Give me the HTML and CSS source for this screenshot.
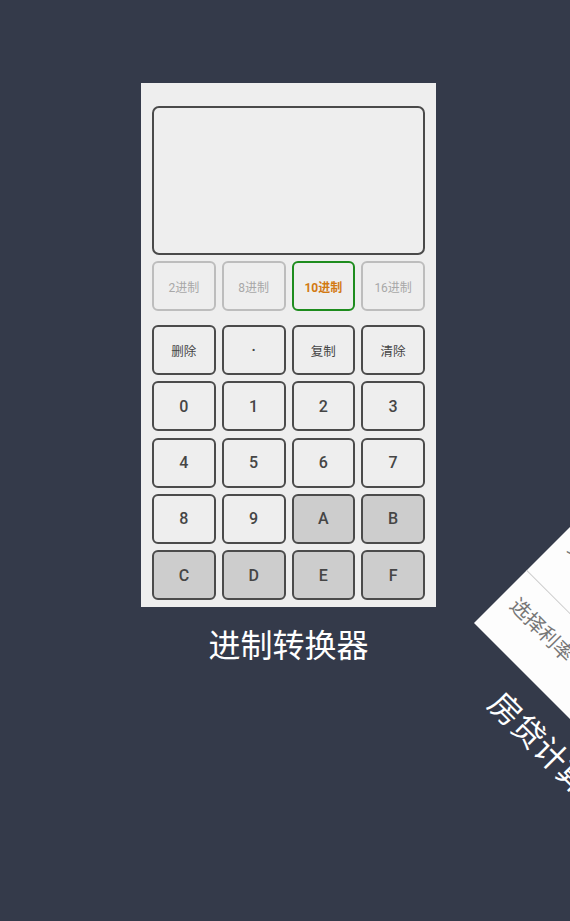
FILE: index.html
```html
<!DOCTYPE html>
<html lang="zh">
<head>
<meta charset="utf-8">
<title>进制转换器</title>
<link rel="stylesheet" href="styles.css">
</head>
<body>
<div class="stage">
  <div class="item">
    <div class="card">
      <div class="display"></div>
      <div class="modes">
        <div class="mode">2进制</div>
        <div class="mode">8进制</div>
        <div class="mode active">10进制</div>
        <div class="mode">16进制</div>
      </div>
      <div class="keys">
        <div class="key small">删除</div>
        <div class="key dot">·</div>
        <div class="key small">复制</div>
        <div class="key small">清除</div>
        <div class="key">0</div>
        <div class="key">1</div>
        <div class="key">2</div>
        <div class="key">3</div>
        <div class="key">4</div>
        <div class="key">5</div>
        <div class="key">6</div>
        <div class="key">7</div>
        <div class="key">8</div>
        <div class="key">9</div>
        <div class="key hex">A</div>
        <div class="key hex">B</div>
        <div class="key hex">C</div>
        <div class="key hex">D</div>
        <div class="key hex">E</div>
        <div class="key hex">F</div>
      </div>
    </div>
    <div class="caption">进制转换器</div>
  </div>

  <div class="item next">
    <div class="card loan">
      <div class="row tall">贷款年限</div>
      <div class="row">选择利率</div>
    </div>
    <div class="caption">房贷计算器</div>
  </div>
</div>
</body>
</html>
```

FILE: styles.css
```css
html, body {
  margin: 0;
  padding: 0;
  background: #343a4a;
  width: 570px;
  height: 921px;
  overflow: hidden;
  font-family: Roboto, "Noto Sans CJK SC", sans-serif;
}

.stage {
  position: relative;
  width: 570px;
  height: 921px;
  padding: 83px 0 0 141px;
  box-sizing: border-box;
}

.item {
  width: 295px;
}

.card {
  width: 295px;
  height: 524px;
  box-sizing: border-box;
  background: #eeeeee;
  padding: 23px 11px 7px 11px;
  display: flex;
  flex-direction: column;
}

.display {
  height: 149px;
  box-sizing: border-box;
  border: 2px solid #4a4a4a;
  border-radius: 7px;
  background: #eeeeee;
}

.modes {
  margin-top: 6px;
  display: grid;
  grid-template-columns: repeat(4, 1fr);
  column-gap: 6px;
}

.mode {
  height: 50px;
  box-sizing: border-box;
  border: 2px solid #bdbdbd;
  border-radius: 6px;
  display: flex;
  align-items: center;
  justify-content: center;
  font-size: 12px;
  color: #a8a8a8;
}

.mode.active {
  border-color: #1e8c1e;
  color: #d27a12;
  font-weight: 700;
}

.keys {
  margin-top: 14px;
  display: grid;
  grid-template-columns: repeat(4, 1fr);
  grid-auto-rows: 50px;
  column-gap: 6px;
  row-gap: 6.25px;
}

.key {
  box-sizing: border-box;
  border: 2px solid #4b4b4b;
  border-radius: 6px;
  background: #eeeeee;
  display: flex;
  align-items: center;
  justify-content: center;
  font-size: 16px;
  font-weight: 500;
  color: #454545;
}

.key.small {
  font-size: 12.5px;
  font-weight: 400;
}

.key.dot {
  font-size: 14px;
  font-weight: 700;
}

.key.hex {
  background: #cdcdcd;
}

.caption {
  margin-top: 20px;
  height: 32px;
  line-height: 32px;
  font-size: 32px;
  text-align: center;
  color: #ffffff;
  font-family: "Noto Sans CJK SC", sans-serif;
}

.item.next {
  position: absolute;
  left: 474px;
  top: 99px;
  transform-origin: 0 524px;
  transform: rotate(45deg);
}

.card.loan {
  background: #fdfdfd;
  padding: 0;
  justify-content: flex-end;
}

.row {
  height: 60px;
  line-height: 60px;
  padding-left: 13px;
  font-size: 20px;
  color: #777777;
  font-family: "Noto Sans CJK SC", sans-serif;
  flex-shrink: 0;
}

.row.tall {
  height: 86px;
  line-height: 72px;
  border-bottom: 1px solid #cccccc;
}

.card.loan .row:last-child {
  margin-bottom: 14px;
}
```
